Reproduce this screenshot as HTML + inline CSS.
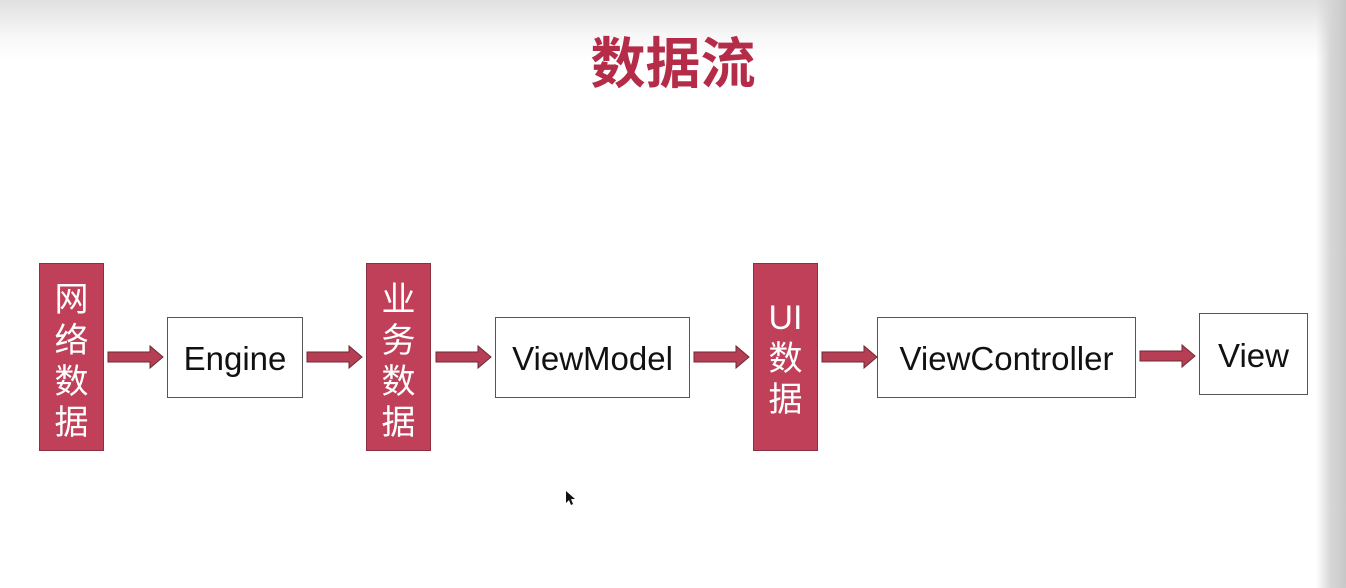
<!DOCTYPE html>
<html><head><meta charset="utf-8"><style>
html,body{margin:0;padding:0}
body{width:1346px;height:588px;position:relative;overflow:hidden;background:#fff;font-family:"Liberation Sans","Noto Sans CJK SC",sans-serif}
.topg{position:absolute;left:0;top:0;width:1346px;height:60px;background:linear-gradient(#e0e0e0,#f7f7f7 60%,#fff)}
.rg{position:absolute;right:0;top:0;width:30px;height:588px;background:linear-gradient(90deg,rgba(255,255,255,0),#d6d6d6 50%,#c8c8c8)}
.title{position:absolute;left:0;width:1346px;top:24px;text-align:center;font-size:55px;font-weight:bold;color:#b52c48;font-family:"Noto Sans CJK SC",sans-serif;line-height:70px}
.red{position:absolute;top:263px;width:65px;height:188px;background:#c0405a;border:1px solid #8a3040;color:#fff;font-size:34px;text-align:center;line-height:41px;box-sizing:border-box;padding-top:16px;font-family:"Liberation Sans","Noto Sans CJK SC",sans-serif}
.box{position:absolute;border:1.5px solid #555;background:#fff;box-sizing:border-box;font-size:33px;color:#111;display:flex;align-items:center;justify-content:center;padding-top:3px}
.arr{position:absolute}
</style></head><body>
<div class="topg"></div>
<div class="rg"></div>
<div class="title">数据流</div>
<div class="red" style="left:39px">网<br>络<br>数<br>据</div>
<div class="red" style="left:366px">业<br>务<br>数<br>据</div>
<div class="red" style="left:753px;padding-top:34px">UI<br>数<br>据</div>
<div class="box" style="left:167px;top:317px;width:136px;height:81px">Engine</div>
<div class="box" style="left:495px;top:317px;width:195px;height:81px">ViewModel</div>
<div class="box" style="left:877px;top:317px;width:259px;height:81px">ViewController</div>
<div class="box" style="left:1199px;top:313px;width:109px;height:82px">View</div>
<svg class="arr" width="1346" height="588" style="left:0;top:0">
<defs><path id="a" d="M0,-5 H42 V-11 L55,0 L42,11 V5 H0 Z" fill="#b73f55" stroke="#6e2a34" stroke-width="1"/></defs>
<use href="#a" x="108" y="357"/>
<use href="#a" x="307" y="357"/>
<use href="#a" x="436" y="357"/>
<use href="#a" x="694" y="357"/>
<use href="#a" x="822" y="357"/>
<use href="#a" x="1140" y="356"/>
<path d="M566,491 L566,503 L569,500 L571,505 L573,504 L571,499 L575,499 Z" fill="#111"/>
</svg>
</body></html>
